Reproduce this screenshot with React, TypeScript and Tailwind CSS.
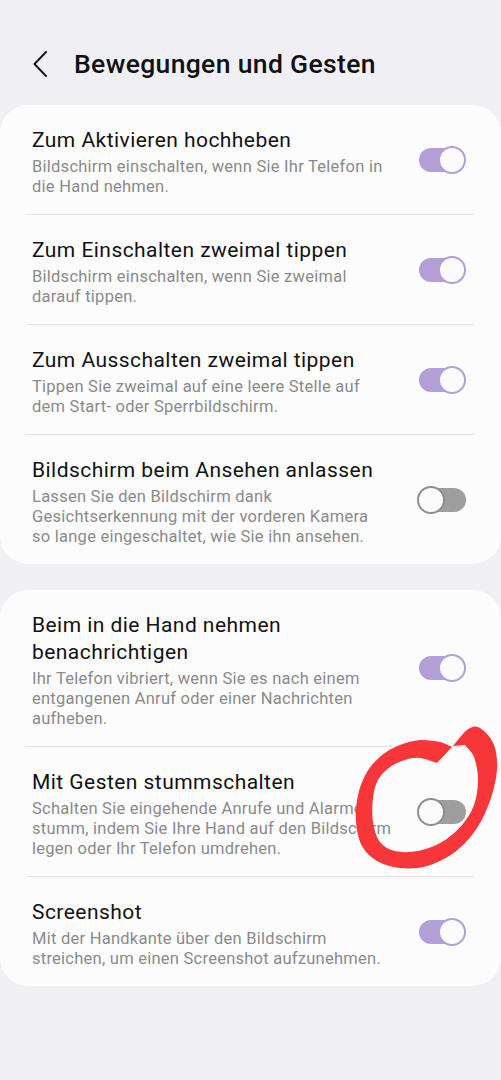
import React from "react";

type Item = {
  title: string[];
  sub: string[];
  on: boolean;
};

const groupA: Item[] = [
  {
    title: ["Zum Aktivieren hochheben"],
    sub: ["Bildschirm einschalten, wenn Sie Ihr Telefon in", "die Hand nehmen."],
    on: true,
  },
  {
    title: ["Zum Einschalten zweimal tippen"],
    sub: ["Bildschirm einschalten, wenn Sie zweimal", "darauf tippen."],
    on: true,
  },
  {
    title: ["Zum Ausschalten zweimal tippen"],
    sub: ["Tippen Sie zweimal auf eine leere Stelle auf", "dem Start- oder Sperrbildschirm."],
    on: true,
  },
  {
    title: ["Bildschirm beim Ansehen anlassen"],
    sub: [
      "Lassen Sie den Bildschirm dank",
      "Gesichtserkennung mit der vorderen Kamera",
      "so lange eingeschaltet, wie Sie ihn ansehen.",
    ],
    on: false,
  },
];

const groupB: Item[] = [
  {
    title: ["Beim in die Hand nehmen", "benachrichtigen"],
    sub: [
      "Ihr Telefon vibriert, wenn Sie es nach einem",
      "entgangenen Anruf oder einer Nachrichten",
      "aufheben.",
    ],
    on: true,
  },
  {
    title: ["Mit Gesten stummschalten"],
    sub: [
      "Schalten Sie eingehende Anrufe und Alarme",
      "stumm, indem Sie Ihre Hand auf den Bildschirm",
      "legen oder Ihr Telefon umdrehen.",
    ],
    on: false,
  },
  {
    title: ["Screenshot"],
    sub: ["Mit der Handkante über den Bildschirm", "streichen, um einen Screenshot aufzunehmen."],
    on: true,
  },
];

// smooth curve through points (catmull-rom -> cubic bezier)
function smooth(pts: number[][], move: boolean) {
  let d = move ? `M${pts[0][0]} ${pts[0][1]}` : `L${pts[0][0]} ${pts[0][1]}`;
  for (let i = 0; i < pts.length - 1; i++) {
    const p0 = pts[i - 1] || pts[i];
    const p1 = pts[i];
    const p2 = pts[i + 1];
    const p3 = pts[i + 2] || p2;
    const c1x = p1[0] + (p2[0] - p0[0]) / 6;
    const c1y = p1[1] + (p2[1] - p0[1]) / 6;
    const c2x = p2[0] - (p3[0] - p1[0]) / 6;
    const c2y = p2[1] - (p3[1] - p1[1]) / 6;
    d += ` C${c1x.toFixed(1)} ${c1y.toFixed(1)} ${c2x.toFixed(1)} ${c2y.toFixed(1)} ${p2[0]} ${p2[1]}`;
  }
  return d;
}

const outer = [
  [452, 747], [440, 742], [420, 740], [400, 745], [382, 755], [367, 772], [358, 795],
  [356, 822], [362, 846], [377, 861], [400, 868], [427, 866], [455, 852], [477, 828],
  [491, 798], [497, 770], [495, 748], [488, 735], [478, 727], [470, 728], [462, 735], [453, 746],
];
const inner = [
  [465, 745], [474, 757], [478, 780], [474, 805], [462, 825], [442, 842], [418, 851],
  [395, 851], [380, 842], [373, 822], [373, 798], [378, 780], [390, 767], [405, 760],
  [420, 758], [437, 763],
];
const scribble = smooth(outer, true) + " " + smooth(inner, false) + " Z";

function Toggle({ on }: { on: boolean }) {
  return (
    <div className="relative w-[49px] h-[28px] shrink-0 -mt-[5px]">
      {on ? (
        <>
          <div className="absolute top-[2px] bottom-[2px] left-[2px] right-[4px] rounded-full bg-[#b39ed8]" />
          <div className="absolute top-0 right-0 w-[28px] h-[28px] rounded-full bg-[#fbfbfd] border-2 border-[#b39ed8]" />
        </>
      ) : (
        <>
          <div className="absolute top-[2px] bottom-[2px] left-[10px] right-0 rounded-full bg-[#9e9e9e]" />
          <div className="absolute top-0 left-0 w-[28px] h-[28px] rounded-full bg-[#fbfbfb] border-2 border-[#8f8f8f]" />
        </>
      )}
    </div>
  );
}

function Group({ items }: { items: Item[] }) {
  return (
    <div className="bg-[#fcfcfc] rounded-[28px]">
      {items.map((it, i) => (
        <div key={i}>
          {i > 0 && <div className="mx-[26px] h-px bg-[#e4e4e6]" />}
          <div className="flex items-center justify-between pl-8 pr-[35px] pt-[22px] pb-[17px]">
            <div>
              <div className="text-[21px] leading-[27px] tracking-[0.45px] text-[#111111]">
                {it.title.map((t, j) => (
                  <div key={j} className="whitespace-nowrap">{t}</div>
                ))}
              </div>
              <div className="mt-[3px] text-[16.5px] leading-[20px] tracking-[0.25px] text-[#8a8a8a]">
                {it.sub.map((t, j) => (
                  <div key={j} className="whitespace-nowrap">{t}</div>
                ))}
              </div>
            </div>
            <Toggle on={it.on} />
          </div>
        </div>
      ))}
    </div>
  );
}

export default function App() {
  return (
    <div
      className="relative w-[501px] h-[1080px] bg-[#f0eff4] overflow-hidden"
      style={{ fontFamily: "Roboto, 'Noto Sans', sans-serif" }}
    >
      <div className="flex items-center h-[48px] mt-[40px] mb-[17px]">
        <svg width="16" height="26" viewBox="0 0 16 26" className="ml-[32px]">
          <path d="M14 1 L2.5 13 L14 25" fill="none" stroke="#1a1a1a" strokeWidth="2" strokeLinecap="round" strokeLinejoin="round" />
        </svg>
        <h1 className="ml-[26px] text-[26.5px] font-medium text-[#111111] tracking-[0.35px]">
          Bewegungen und Gesten
        </h1>
      </div>

      <Group items={groupA} />
      <div className="mt-[26px]">
        <Group items={groupB} />
      </div>

      {/* red marker circle */}
      <svg className="absolute left-0 top-0 pointer-events-none" width="501" height="1080">
        <path d={scribble} fill="#f63639" fillRule="nonzero" />
      </svg>
    </div>
  );
}
